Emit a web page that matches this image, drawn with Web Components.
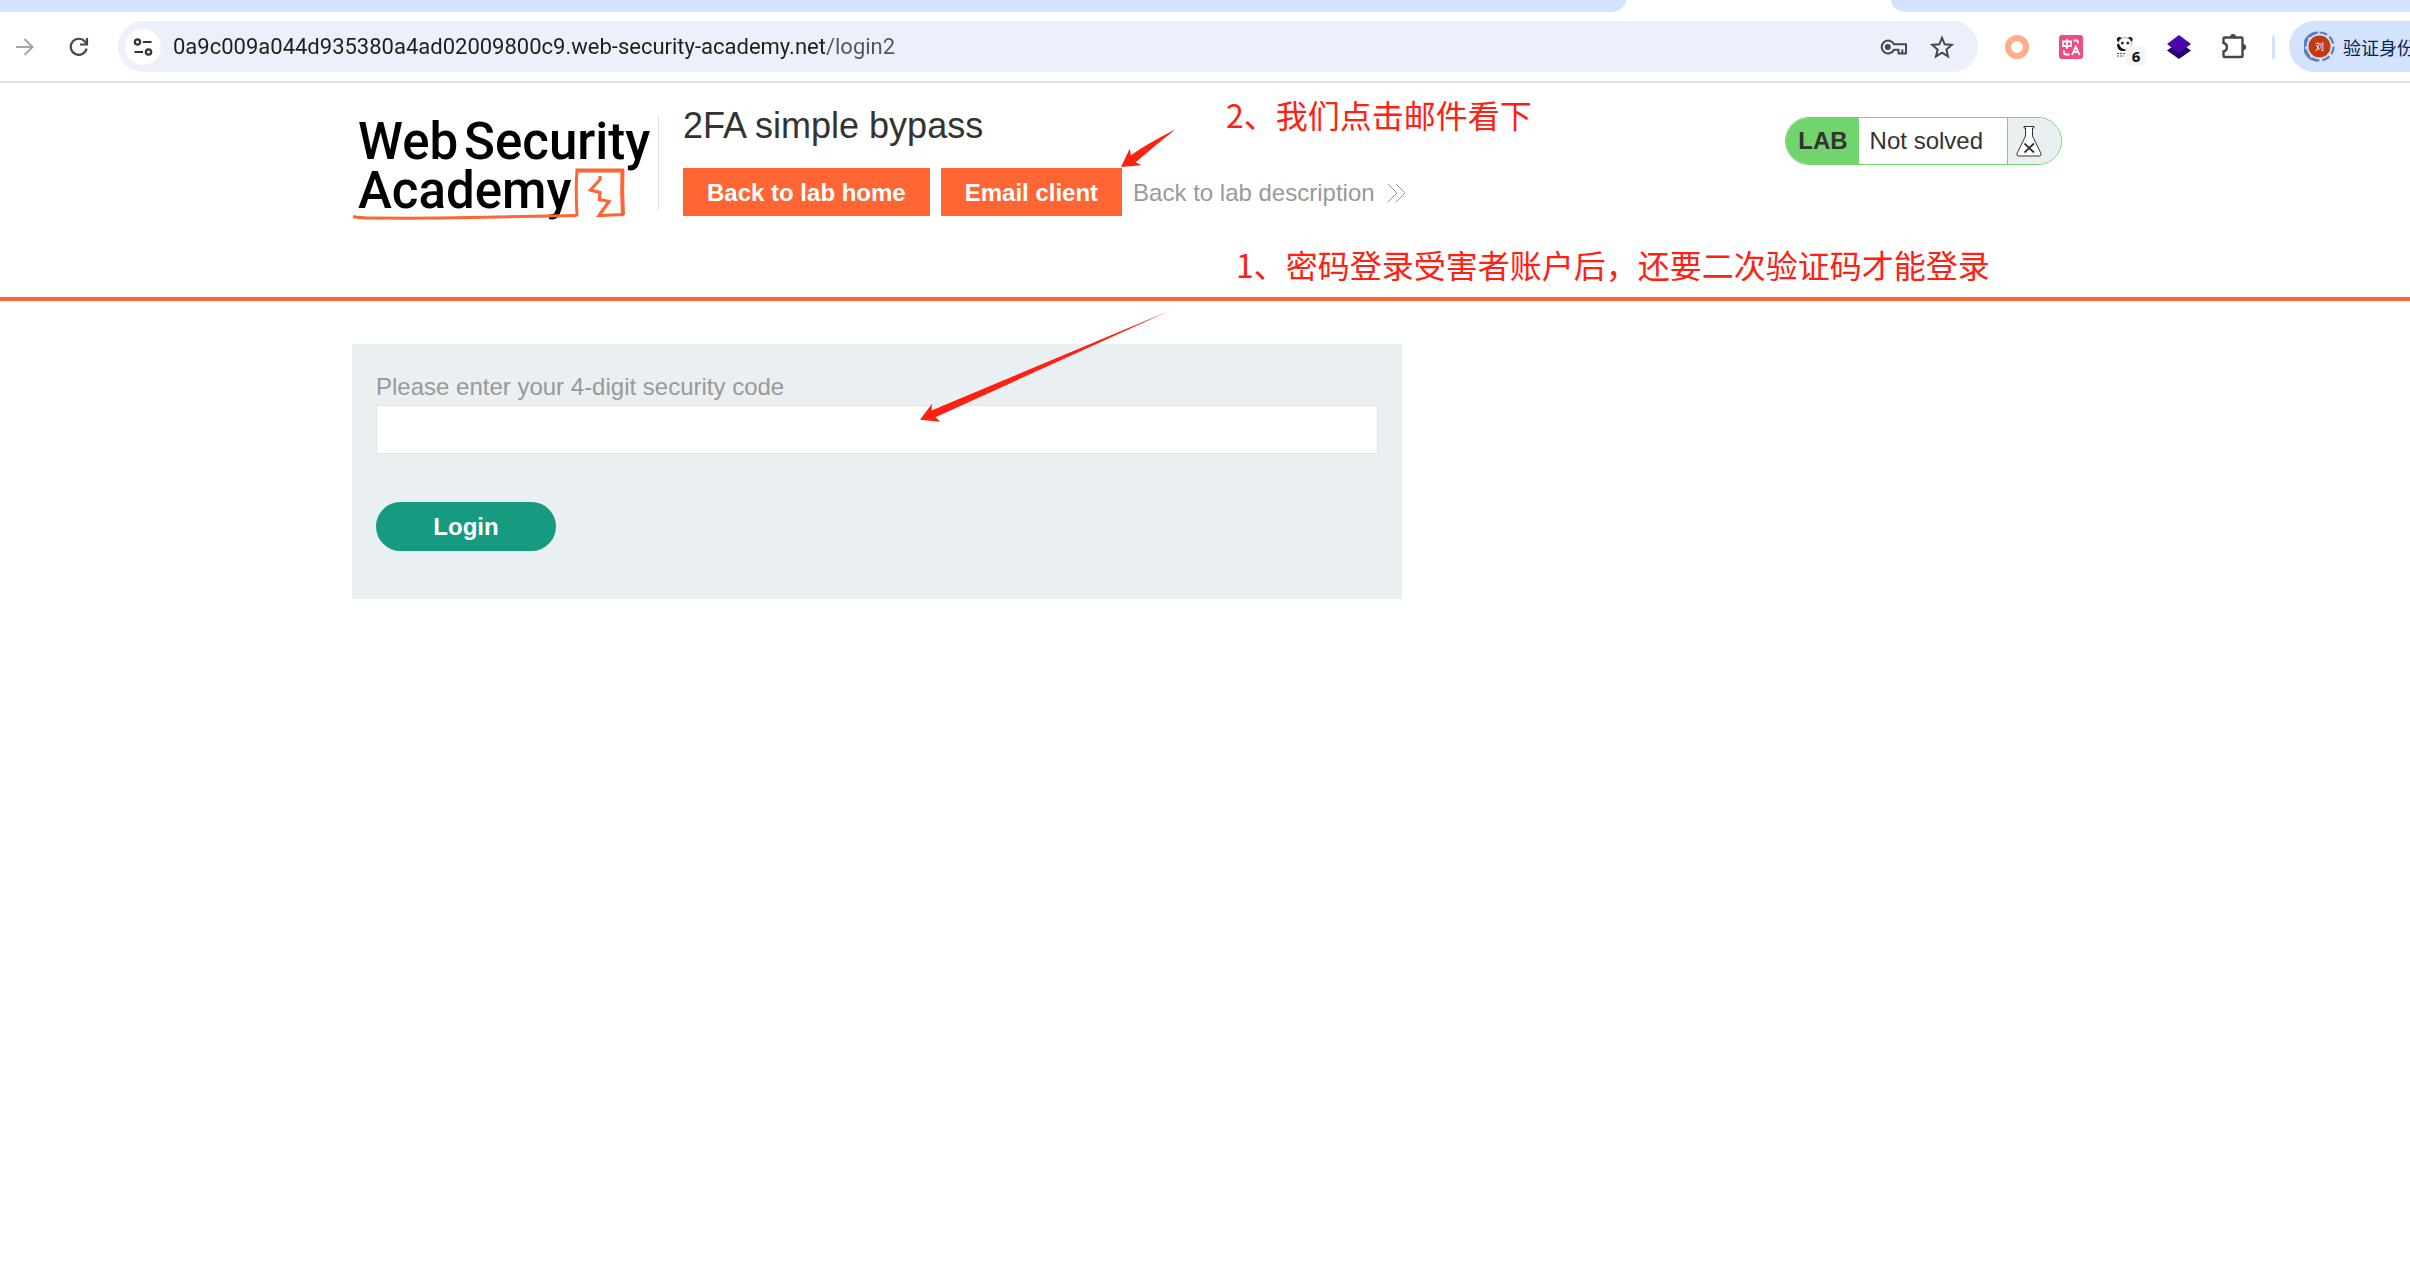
<!DOCTYPE html>
<html lang="en">
<head>
<meta charset="utf-8">
<title>2FA simple bypass</title>
<style>
  body {
    margin: 0;
    background: #fff;
    color: #333332;
    font-family: "Liberation Sans", Arial, sans-serif;
    font-size: 24px;
    overflow-x: hidden;
  }
</style>
</head>
<body>
<browser-bar url="0a9c009a044d935380a4ad02009800c9.web-security-academy.net/login2"></browser-bar>
<lab-header>
  <academy-logo slot="logo"></academy-logo>
  <span slot="title">2FA simple bypass</span>
  <lab-status slot="status">Not solved</lab-status>
</lab-header>
<login-form></login-form>
<note-layer></note-layer>

<script>
class BrowserBar extends HTMLElement {
  connectedCallback() {
    this.attachShadow({ mode: 'open' });
    this.shadowRoot.innerHTML = `
      <style>
        :host {
          display: block;
          border-bottom: 2px solid #dfe1e1;
        }
        .tabs {
          display: flex;
          height: 12px;
        }
        .tabs div {
          background: #d3e3fd;
        }
        .before {
          flex: 1626;
          border-bottom-right-radius: 16px 12px;
        }
        .tabs .active {
          flex: 265;
          background: #fff;
        }
        .after {
          flex: 519;
          border-bottom-left-radius: 16px 12px;
        }
        .toolbar {
          display: flex;
          align-items: center;
          height: 69px;
        }
        button {
          display: flex;
          align-items: center;
          justify-content: center;
          flex: none;
          width: 54px;
          height: 48px;
          padding: 0;
          border: 0;
          background: none;
          color: #474747;
        }
        svg {
          display: block;
        }
        .nav {
          margin-left: -2px;
          display: flex;
        }
        .omnibox {
          display: flex;
          align-items: center;
          flex: 1;
          box-sizing: border-box;
          height: 51px;
          margin: 0 12px;
          padding: 0 12px 0 7px;
          border-radius: 26px;
          background: #ecf0fa;
        }
        .omnibox button {
          width: 48px;
        }
        .omnibox .site {
          width: 36px;
          height: 36px;
          margin-right: 12px;
          border-radius: 50%;
          background: #fff;
        }
        input {
          flex: 1;
          min-width: 0;
          height: 36px;
          padding: 0;
          border: 0;
          outline: 0;
          font: 22px Roboto, sans-serif;
          color: #1f1f1f;
          /* path part of the address is greyer than the host */
          background: linear-gradient(90deg, #1f1f1f 652px, #555 652px);
          -webkit-background-clip: text;
          background-clip: text;
          -webkit-text-fill-color: transparent;
        }
        .extensions {
          display: flex;
        }
        .panda {
          position: relative;
        }
        .badge {
          position: absolute;
          left: 28px;
          top: 23px;
          width: 20px;
          border-radius: 6px;
          background: #f5f5f5;
          color: #111;
          font: 700 15px/20px "Open Sans", sans-serif;
        }
        .divider {
          width: 3px;
          height: 24px;
          margin: 0 14px 0 12px;
          border-radius: 2px;
          background: #d3e3fd;
        }
        button.profile {
          justify-content: flex-start;
          gap: 8px;
          box-sizing: border-box;
          width: 121px;
          height: 51px;
          padding-left: 15px;
          border-radius: 26px 0 0 26px;
          background: #d3e3fd;
          color: #0a2350;
          font: 18px "Noto Sans CJK SC", sans-serif;
          white-space: nowrap;
          overflow: hidden;
        }
        .profile svg {
          flex: none;
        }
      </style>
      <div class="tabs"><div class="before"></div><div class="active"></div><div class="after"></div></div>
      <div class="toolbar">
        <div class="nav">
          <button aria-label="Forward">
            <svg width="18" height="18" fill="none" stroke="#a5a5a5" stroke-width="2"><path d="M0 9h16M8.500 1l8 8-8 8"/></svg>
          </button>
          <button aria-label="Reload">
            <svg width="20" height="20" fill="none" stroke="#474747" stroke-width="2.200"><path d="M17.600 11.500a8 8 0 1 1-1.700-6.900l1.800 2"/><path d="M18 1v6.500h-7"/></svg>
          </button>
        </div>
        <div class="omnibox">
          <button class="site" aria-label="Site information">
            <svg width="20" height="18" fill="none" stroke="#333" stroke-width="2.200"><circle cx="4.500" cy="4" r="2.700"/><path d="M10 4h8.500M1.500 14H10"/><circle cx="15.500" cy="14" r="2.700"/></svg>
          </button>
          <input type="text" aria-label="Address" spellcheck="false">
          <button aria-label="Passwords">
            <svg width="28" height="18" fill="none" stroke="#474747" stroke-width="2"><path d="M14 6.200A6.500 6.500 0 1 0 14 11.800H18.500V15.500H26V6.200z" stroke-linejoin="round"/><circle cx="7.800" cy="9" r="3" fill="#474747" stroke="none"/><path d="M22.300 11.500v4"/></svg>
          </button>
          <button aria-label="Bookmark">
            <svg width="24" height="24" fill="none" stroke="#474747" stroke-width="2"><path d="M12 2.800l2.700 6.500 7 .6-5.300 4.600 1.600 6.900-6-3.700-6 3.700 1.600-6.900-5.300-4.600 7-.6z"/></svg>
          </button>
        </div>
        <div class="extensions">
          <button aria-label="Ring">
            <svg width="24" height="24"><circle cx="12" cy="12" r="9" fill="none" stroke="#ffac87" stroke-width="6"/></svg>
          </button>
          <button aria-label="Translate">
            <svg width="24" height="24"><rect width="24" height="24" rx="3" fill="#ee4b87"/><path d="M4 6.500h8v4.500H4zM8 4v10M14.500 5.500h3q1.500 0 1.500 3M5 15.500v2q0 2 2 2h3.500M13 20l3.800-8.500L20.600 20M14.500 17h4.600" fill="none" stroke="#fff" stroke-width="1.800"/></svg>
          </button>
          <button class="panda" aria-label="Panda">
            <svg width="24" height="24"><circle cx="6.500" cy="4.500" r="2.600" fill="#111"/><circle cx="17" cy="4.500" r="2.600" fill="#111"/><ellipse cx="12" cy="8.500" rx="6.500" ry="6" fill="#fff" stroke="#aaa"/><ellipse cx="9.400" cy="8" rx="1.500" ry="1.500" fill="#333"/><ellipse cx="14.800" cy="8" rx="1.500" ry="1.500" fill="#333"/><path d="M4 9q0 6 5 7h4l-2-2q-3 0-5-5z" fill="#111"/><path d="M4 18.500h8M4 21h7" stroke="#555" stroke-dasharray="2 1"/></svg>
            <span class="badge">6</span>
          </button>
          <button aria-label="Layers">
            <svg width="24" height="24"><path d="M0 15.500L12 7l12 8.500L12 24z" fill="#22006f"/><path d="M0 9L12 0l12 9-12 9z" fill="#4907ac"/></svg>
          </button>
          <button aria-label="Extensions">
            <svg width="26" height="26" viewBox="-1 1 26 26"><path d="M2.500 5.500Q2.500 4.500 3.500 4.500H20.500Q21.500 4.500 21.500 5.500V23Q21.500 24 20.500 24H3.500Q2.500 24 2.500 23V18.500Q6 17.500 6 14.200T2.500 10z" fill="none" stroke="#474747" stroke-width="2.400"/><path d="M9 4a3 3 0 0 1 6 0zM22 11a3.200 3.200 0 0 1 0 6.400z" fill="#474747"/></svg>
          </button>
        </div>
        <div class="divider"></div>
        <button class="profile">
          <svg width="31" height="31"><g fill="none" stroke="#5d7fb9" stroke-width="2.200"><path d="M14 1.500A14 14 0 0 0 14 29.500"/><circle cx="15.500" cy="15.500" r="14" stroke-dasharray="8 3" pathLength="88"/></g><circle cx="15.500" cy="15.500" r="11" fill="#c53a11"/><text x="15.500" y="19" text-anchor="middle" font-size="9" fill="#fff">刘</text></svg>
          <span>验证身份</span>
        </button>
      </div>
    `;
    this.shadowRoot.querySelector('input').value = this.getAttribute('url');
  }
}

class AcademyLogo extends HTMLElement {
  connectedCallback() {
    this.attachShadow({ mode: 'open' });
    this.shadowRoot.innerHTML = `
      <style>
        :host {
          display: block;
          position: relative;
          box-sizing: border-box;
          width: 307px;
          height: 93px;
          padding-left: 6px;
          border-right: 1px solid #dfe1e1;
          color: #000;
          font: 500 51px/49px Roboto, sans-serif;
        }
        .line {
          display: flex;
          gap: 6px;
          white-space: nowrap;
        }
        svg {
          position: absolute;
          left: 0;
          top: 0;
        }
      </style>
      <svg width="280" height="104" fill="none" stroke="#ff6633">
        <path d="M1 99.500Q8 101 20 101Q70 101.500 120 100.500T224 98.500" stroke-width="3"/>
        <path d="M225 99.500Q223.500 70 225 54" stroke-width="3"/>
        <path d="M223.500 53.500H272" stroke-width="4"/>
        <path d="M270.500 53Q269.500 75 271 98" stroke-width="4"/>
        <path d="M272 97.500L247 98.500L257 84.500L247.500 82.500L248 75.500L238.500 73L248 62.500V59" stroke-width="3.200"/>
      </svg>
      <div class="line"><span>Web</span><span>Security</span></div>
      <div class="line"><span>Academy</span></div>
    `;
  }
}

class LabStatus extends HTMLElement {
  connectedCallback() {
    this.attachShadow({ mode: 'open' });
    this.shadowRoot.innerHTML = `
      <style>
        :host {
          display: flex;
          align-items: stretch;
          box-sizing: border-box;
          height: 48px;
          border: 1px solid #71d46c;
          border-radius: 24px;
          overflow: hidden;
          line-height: 46px;
        }
        b {
          padding: 0 11px 0 12px;
          background: #71d46c;
        }
        .text {
          padding: 0 24px 0 11px;
          border-right: 1px solid #71d46c;
        }
        .flask {
          display: flex;
          align-items: center;
          padding: 0 19px 0 8px;
          background: #eaeff2;
        }
      </style>
      <b>LAB</b>
      <span class="text"><slot></slot></span>
      <span class="flask">
        <svg width="26" height="32" fill="#fff" stroke="#333" stroke-width="1"><path d="M8 1.500h10v1.500h-1.500v8L25 28.500q.5 2.500-1.500 2.500h-21q-2 0-1.500-2.500L9.500 11V3H8z"/><path d="M8.500 18.500l9.500 9M18 18.500l-9.500 9" stroke-width="1.800"/></svg>
      </span>
    `;
  }
}

class LabHeader extends HTMLElement {
  connectedCallback() {
    this.attachShadow({ mode: 'open' });
    this.shadowRoot.innerHTML = `
      <style>
        :host {
          display: block;
          border-bottom: 4px solid #ff6633;
        }
        .container {
          display: flex;
          align-items: flex-start;
          max-width: 1710px;
          margin: 0 auto;
          padding: 23px 0 81px 4px;
        }
        .logo, .status {
          padding-top: 11px;
        }
        .title {
          flex: 1;
          margin-left: 24px;
        }
        h2 {
          margin: 0 0 22px;
          font-size: 36px;
          font-weight: 400;
          line-height: 40px;
        }
        .links {
          display: flex;
          align-items: center;
        }
        a {
          padding-top: 2px;
          line-height: 46px;
          text-decoration: none;
          white-space: nowrap;
        }
        .button {
          margin-right: 11px;
          padding: 2px 24px 0;
          background: #ff6633;
          color: #fff;
          font-weight: 700;
        }
        .back {
          display: flex;
          align-items: center;
          gap: 12px;
          color: #999;
        }
      </style>
      <div class="container">
        <div class="logo"><slot name="logo"></slot></div>
        <div class="title">
          <h2><slot name="title"></slot></h2>
          <div class="links">
            <a class="button" href="#">Back to lab home</a>
            <a class="button" href="#">Email client</a>
            <a class="back" href="#">Back to lab description
              <svg width="19" height="20" fill="none" stroke="#999" stroke-width="1"><path d="M1 1l9 9-9 9M9 1l9 9-9 9"/></svg>
            </a>
          </div>
        </div>
        <div class="status"><slot name="status"></slot></div>
      </div>
    `;
  }
}

class LoginForm extends HTMLElement {
  connectedCallback() {
    this.attachShadow({ mode: 'open' });
    this.shadowRoot.innerHTML = `
      <style>
        :host {
          display: block;
          max-width: 1710px;
          margin: 0 auto;
          padding: 43px 0 0 4px;
        }
        form {
          box-sizing: border-box;
          max-width: 1050px;
          padding: 24px 24px 48px;
          background: #eaeff2;
        }
        label {
          display: block;
          color: #999;
          line-height: 37px;
        }
        input {
          display: block;
          box-sizing: border-box;
          width: 100%;
          height: 49px;
          padding: 0 12px;
          border: 1px solid #e3e6e6;
          background: #fff;
          font: inherit;
        }
        button {
          display: block;
          width: 180px;
          height: 49px;
          margin-top: 48px;
          border: 0;
          border-radius: 25px;
          background: #179b80;
          color: #fff;
          font: inherit;
          font-weight: 700;
        }
      </style>
      <form>
        <label for="code">Please enter your 4-digit security code</label>
        <input id="code" type="text" name="mfa-code">
        <button type="submit">Login</button>
      </form>
    `;
  }
}

// Red remarks and arrows drawn over the page
class NoteLayer extends HTMLElement {
  connectedCallback() {
    this.attachShadow({ mode: 'open' });
    this.shadowRoot.innerHTML = `
      <style>
        :host {
          position: absolute;
          left: 0;
          top: 0;
          color: #ff2011;
          font: 32px/40px "Noto Sans CJK SC", sans-serif;
          pointer-events: none;
        }
        p {
          position: absolute;
          margin: 0;
          white-space: nowrap;
        }
        .mail {
          left: 1226px;
          top: 94px;
        }
        .code {
          left: 1236px;
          top: 244px;
        }
        svg {
          display: block;
        }
      </style>
      <svg width="1200" height="430" fill="#ff2011">
        <path d="M1121 167L1129.700 148.700L1131 155.300Q1145 145 1176 129Q1158 143 1135.700 162.300L1141.300 165.300z"/>
        <path d="M920 419.700L932 403.700L931.500 410.500L1169 311L935.400 417.300L940.300 421.700z"/>
      </svg>
      <p class="mail">2、我们点击邮件看下</p>
      <p class="code">1、密码登录受害者账户后，还要二次验证码才能登录</p>
    `;
  }
}

customElements.define('browser-bar', BrowserBar);
customElements.define('academy-logo', AcademyLogo);
customElements.define('lab-status', LabStatus);
customElements.define('lab-header', LabHeader);
customElements.define('login-form', LoginForm);
customElements.define('note-layer', NoteLayer);
</script>
</body>
</html>
